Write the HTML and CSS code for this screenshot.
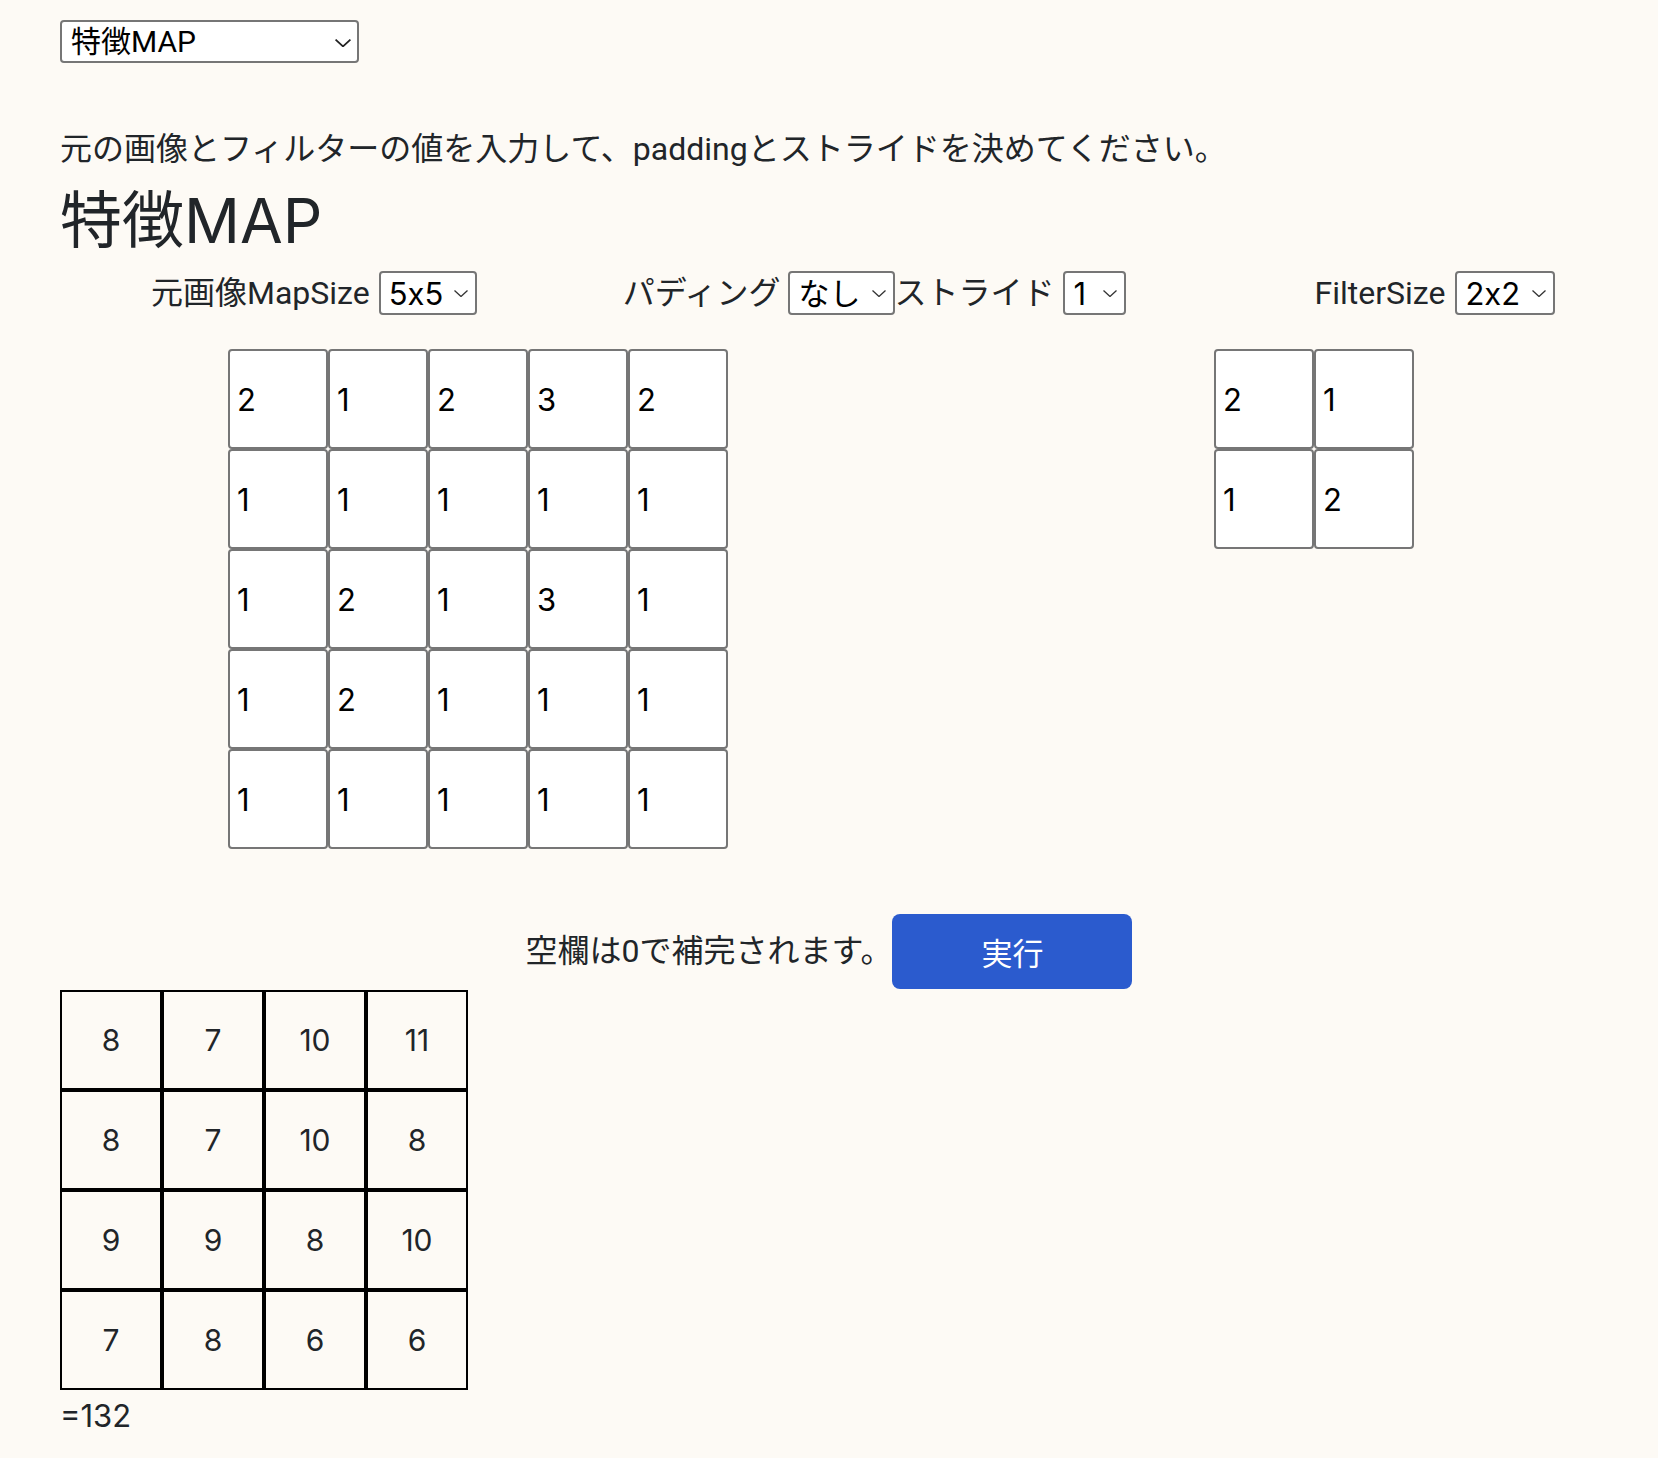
FILE: index.html
```html
<!DOCTYPE html>
<html lang="ja">
<head>
<meta charset="utf-8">
<title>特徴MAP</title>
<link rel="stylesheet" href="styles.css">
</head>
<body>
<div class="page">
  <span class="sel sel-mode">
    <select class="select"><option>特徴MAP</option></select>
    <svg class="chev" viewBox="0 0 14 7"><path d="M0.5 0.5 L7 6.5 L13.5 0.5"/></svg>
  </span>

  <p class="lead">元の画像とフィルターの値を入力して、paddingとストライドを決めてください。</p>
  <h1 class="title">特徴MAP</h1>

  <div class="controls">
    <div class="ctl ctl-map">
      <label class="lbl lbl-map">元画像MapSize</label>
      <span class="sel sel-size">
        <select class="select"><option>5x5</option></select>
        <svg class="chev" viewBox="0 0 14 7"><path d="M0.5 0.5 L7 6.5 L13.5 0.5"/></svg>
      </span>
    </div>
    <div class="ctl ctl-pad">
      <label class="lbl lbl-pad">パディング</label>
      <span class="sel sel-pad">
        <select class="select"><option>なし</option></select>
        <svg class="chev" viewBox="0 0 14 7"><path d="M0.5 0.5 L7 6.5 L13.5 0.5"/></svg>
      </span>
      <label class="lbl lbl-stride">ストライド</label>
      <span class="sel sel-stride">
        <select class="select"><option>1</option></select>
        <svg class="chev" viewBox="0 0 14 7"><path d="M0.5 0.5 L7 6.5 L13.5 0.5"/></svg>
      </span>
    </div>
    <div class="ctl ctl-filter">
      <label class="lbl">FilterSize</label>
      <span class="sel sel-filter">
        <select class="select"><option>2x2</option></select>
        <svg class="chev" viewBox="0 0 14 7"><path d="M0.5 0.5 L7 6.5 L13.5 0.5"/></svg>
      </span>
    </div>
  </div>

  <div class="grids">
    <div class="grid grid-map">
      <input class="cell" value="2"><input class="cell" value="1"><input class="cell" value="2"><input class="cell" value="3"><input class="cell" value="2">
      <input class="cell" value="1"><input class="cell" value="1"><input class="cell" value="1"><input class="cell" value="1"><input class="cell" value="1">
      <input class="cell" value="1"><input class="cell" value="2"><input class="cell" value="1"><input class="cell" value="3"><input class="cell" value="1">
      <input class="cell" value="1"><input class="cell" value="2"><input class="cell" value="1"><input class="cell" value="1"><input class="cell" value="1">
      <input class="cell" value="1"><input class="cell" value="1"><input class="cell" value="1"><input class="cell" value="1"><input class="cell" value="1">
    </div>
    <div class="grid grid-filter">
      <input class="cell" value="2"><input class="cell" value="1">
      <input class="cell" value="1"><input class="cell" value="2">
    </div>
  </div>

  <div class="run">
    <span class="note">空欄は0で補完されます。</span>
    <button class="btn">実行</button>
  </div>

  <div class="result">
    <div class="rcell">8</div><div class="rcell">7</div><div class="rcell">10</div><div class="rcell">11</div>
    <div class="rcell">8</div><div class="rcell">7</div><div class="rcell">10</div><div class="rcell">8</div>
    <div class="rcell">9</div><div class="rcell">9</div><div class="rcell">8</div><div class="rcell">10</div>
    <div class="rcell">7</div><div class="rcell">8</div><div class="rcell">6</div><div class="rcell">6</div>
  </div>
  <div class="sum">=132</div>
</div>
</body>
</html>
```

FILE: styles.css
```css
html, body {
  margin: 0;
  padding: 0;
  background: #fdfaf5;
}

body {
  font-family: Roboto, "Noto Sans CJK JP", sans-serif;
  color: #212529;
  font-size: 32px;
  line-height: 1.5;
}

.page {
  padding: 20px 60px 20px 60px;
}

/* selects */
.sel {
  position: relative;
  display: inline-block;
  vertical-align: middle;
}

.select {
  -webkit-appearance: none;
  appearance: none;
  box-sizing: border-box;
  background: #fff;
  border: 2px solid #767676;
  border-radius: 4px;
  color: #000;
  font-family: Inter, "Noto Sans CJK JP", sans-serif;
  font-feature-settings: "calt" 0;
  font-size: 31px;
  height: 44px;
  padding: 0 0 0 8px;
  margin: 0;
  display: block;
  outline: none;
}

.chev {
  position: absolute;
  right: 9px;
  top: 50%;
  width: 14px;
  height: 7px;
  margin-top: -3px;
  fill: none;
  stroke: #333;
  stroke-width: 1.3;
}

.sel-mode {
  display: block;
  width: 299px;
}
.sel-mode .select {
  width: 299px;
  height: 43px;
  font-family: Roboto, "Noto Sans CJK JP", sans-serif;
  font-size: 30px;
  padding-left: 9px;
}
.sel-mode .chev {
  right: 8px;
  width: 16px;
  height: 8px;
  margin-top: -3px;
  stroke: #222;
  stroke-width: 1.5;
}

.sel-size .select { width: 98px; }
.sel-filter .select { width: 100px; }
.sel-pad .select { width: 107px; }
.sel-stride .select { width: 63px; }

/* headings */
.lead {
  margin: 64px 0 0 0;
  font-size: 32px;
  line-height: 45px;
}

.title {
  margin: 12px 0 0 0;
  font-family: Inter, "Noto Sans CJK JP", sans-serif;
  font-size: 62px;
  font-weight: 400;
  line-height: 74px;
}

/* controls */
.controls {
  display: flex;
  align-items: center;
  margin-top: 13px;
  padding-left: 91px;
  height: 44px;
}

.ctl {
  display: flex;
  align-items: center;
}

.lbl {
  font-size: 32px;
  line-height: 44px;
  margin-right: 10px;
}

.lbl-map { margin-right: 9px; }

.lbl-pad { margin-right: 8px; }

.lbl-stride {
  margin-left: -1px;
  margin-right: 9px;
}

.ctl-pad { margin-left: 146px; }
.ctl-filter { margin-left: 188px; }

/* input grids */
.grids {
  display: flex;
  align-items: flex-start;
  margin-top: 34px;
  padding-left: 168px;
}

.grid {
  display: grid;
  grid-auto-rows: 100px;
}

.grid-map { grid-template-columns: repeat(5, 100px); }
.grid-filter {
  grid-template-columns: repeat(2, 100px);
  margin-left: 486px;
}

.cell {
  box-sizing: border-box;
  width: 100px;
  height: 100px;
  margin: 0;
  padding: 0 7px;
  border: 2px solid #767676;
  border-radius: 4px;
  background: #fff;
  color: #000;
  font-family: Inter, Arial, sans-serif;
  font-size: 31px;
  outline: none;
}

/* run */
.run {
  display: flex;
  justify-content: center;
  align-items: center;
  gap: 0;
  margin-top: 65px;
}

.note {
  font-size: 32px;
  line-height: 45px;
}

.btn {
  width: 240px;
  height: 75px;
  background: #2b5bce;
  color: #fff;
  border: none;
  border-radius: 8px;
  font-family: Roboto, "Noto Sans CJK JP", sans-serif;
  font-size: 31px;
  margin: 0;
  padding: 0;
}

/* result */
.result {
  display: grid;
  grid-template-columns: repeat(4, 102px);
  grid-auto-rows: 100px;
  width: 408px;
  margin-top: 1px;
}

.rcell {
  box-sizing: border-box;
  border: 2px solid #000;
  display: flex;
  align-items: center;
  justify-content: center;
  font-family: Inter, sans-serif;
  font-size: 30px;
}

.sum {
  font-family: Inter, sans-serif;
  font-size: 31px;
  line-height: 46px;
  margin-top: 3px;
}
```
